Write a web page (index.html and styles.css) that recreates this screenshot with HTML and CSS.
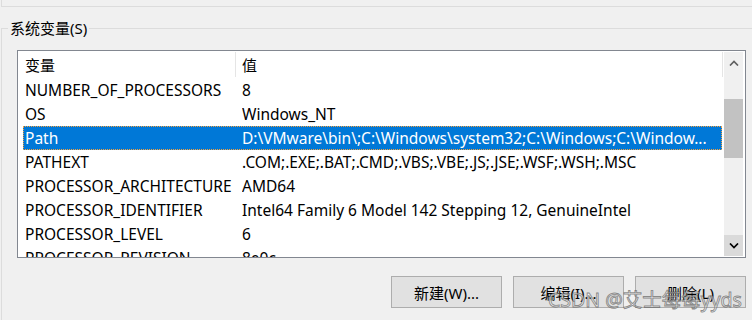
FILE: index.html
```html
<!DOCTYPE html>
<html lang="zh-CN">
<head>
<meta charset="utf-8">
<title>系统变量</title>
<link rel="stylesheet" href="styles.css">
</head>
<body>
<div class="prev-group"></div>
<div class="group">
  <div class="group-label">系统变量(S)</div>
  <div class="listbox">
    <div class="list">
      <div class="header">
        <div class="hcell h1">变量</div>
        <div class="hsep"></div>
        <div class="hcell h2">值</div>
        <div class="hsep"></div>
      </div>
      <div class="row"><span class="c1">NUMBER_OF_PROCESSORS</span><span class="c2">8</span></div>
      <div class="row"><span class="c1">OS</span><span class="c2">Windows_NT</span></div>
      <div class="row selected"><span class="c1">Path</span><span class="c2">D:\VMware\bin\;C:\Windows\system32;C:\Windows;C:\Window...</span></div>
      <div class="row"><span class="c1">PATHEXT</span><span class="c2">.COM;.EXE;.BAT;.CMD;.VBS;.VBE;.JS;.JSE;.WSF;.WSH;.MSC</span></div>
      <div class="row"><span class="c1">PROCESSOR_ARCHITECTURE</span><span class="c2">AMD64</span></div>
      <div class="row"><span class="c1">PROCESSOR_IDENTIFIER</span><span class="c2">Intel64 Family 6 Model 142 Stepping 12, GenuineIntel</span></div>
      <div class="row"><span class="c1">PROCESSOR_LEVEL</span><span class="c2">6</span></div>
      <div class="row"><span class="c1">PROCESSOR_REVISION</span><span class="c2">8e0c</span></div>
    </div>
    <div class="scrollbar">
      <div class="sb-btn">
        <svg width="10" height="6" viewBox="0 0 10 6"><polyline points="1,5.5 5,1.5 9,5.5" fill="none" stroke="#606060" stroke-width="1.7"/></svg>
      </div>
      <div class="track"><div class="thumb"></div></div>
      <div class="sb-btn hover">
        <svg width="10" height="6" viewBox="0 0 10 6"><polyline points="1,0.5 5,4.5 9,0.5" fill="none" stroke="#000" stroke-width="1.7"/></svg>
      </div>
    </div>
  </div>
  <div class="buttons">
    <div class="btn">新建(W)...</div>
    <div class="btn">编辑(I)...</div>
    <div class="btn">删除(L)</div>
  </div>
</div>
<div class="watermark">CSDN @艾士每每yyds</div>
</body>
</html>
```
FILE: styles.css
```css
html, body {
  margin: 0;
  padding: 0;
  width: 752px;
  height: 320px;
  overflow: hidden;
  background: #f0f0f0;
  font-family: "Noto Sans", "Noto Sans CJK SC", sans-serif;
  font-size: 15px;
  color: #000;
}
body { position: relative; }

.prev-group {
  height: 6px;
  margin-left: 1px;
  border-left: 1px solid #dcdcdc;
  border-bottom: 1px solid #dcdcdc;
}

.group {
  position: relative;
  box-sizing: border-box;
  margin-top: 21px;
  margin-left: 1px;
  border-top: 1px solid #dcdcdc;
  border-left: 1px solid #dcdcdc;
  padding: 21px 6px 0 15px;
  height: 292px;
}

.group-label {
  position: absolute;
  top: -11px;
  left: 6px;
  padding: 0 2px;
  line-height: 21px;
  background: #f0f0f0;
}

.listbox {
  box-sizing: border-box;
  height: 208px;
  border: 1px solid #828790;
  background: #fff;
  display: flex;
}

.list {
  flex: 1;
  overflow: hidden;
  min-width: 0;
}

.header {
  display: flex;
  height: 27px;
}
.hcell {
  box-sizing: border-box;
  padding-top: 2px;
  line-height: 25px;
}
.h1 { width: 217px; padding-left: 7px; }
.h2 { width: 486px; padding-left: 6px; }
.hsep {
  width: 1px;
  margin: 1px 0 1px;
  background: #e5e5e5;
}

.row {
  display: flex;
  box-sizing: border-box;
  margin-left: 5px;
  width: 699px;
  height: 24px;
  padding-top: 1px;
  line-height: 21px;
  font-size: 15.5px;
  border: 1px solid transparent;
  white-space: nowrap;
}
.row .c1 {
  box-sizing: border-box;
  width: 218px;
  padding-left: 1px;
  flex: none;
}
.row .c2 {
  flex: 1;
  overflow: hidden;
}
.row.selected {
  background: #0078d7;
  color: #fff;
  border: 1px dotted #f7a13c;
}

.scrollbar {
  width: 19px;
  margin: 1px 2px 1px 0;
  background: #f0f0f0;
  display: flex;
  flex-direction: column;
}
.sb-btn {
  height: 21px;
  display: flex;
  align-items: center;
  justify-content: center;
}
.sb-btn svg { display: block; }
.sb-btn.hover { background: #dadada; }
.track { flex: 1; }
.thumb {
  margin-top: 26px;
  height: 59px;
  background: #c2c2c2;
}

.buttons {
  display: flex;
  justify-content: flex-end;
  gap: 11px;
  margin-top: 18px;
}
.btn {
  box-sizing: border-box;
  width: 111px;
  height: 32px;
  border: 1px solid #adadad;
  background: #e1e1e1;
  display: flex;
  align-items: center;
  justify-content: center;
}

.watermark {
  position: absolute;
  left: 548px;
  top: 289px;
  font-size: 19.5px;
  line-height: 22px;
  white-space: nowrap;
  color: rgba(255, 255, 255, 0.6);
  -webkit-text-stroke: 0.9px rgba(80, 80, 80, 0.65);
}
```
